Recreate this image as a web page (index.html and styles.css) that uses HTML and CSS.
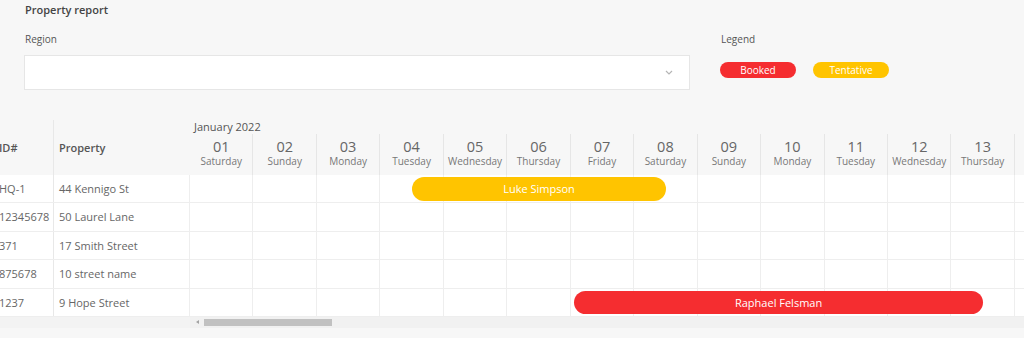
FILE: index.html
```html
<!DOCTYPE html>
<html lang="en">
<head>
    <meta charset="UTF-8">
    <title>Property report</title>
    <link rel="stylesheet" href="styles.css">
</head>
<body>
    <div class="page">
        <h1 class="title">Property report</h1>

        <div class="filters">
            <div class="field region">
                <label>Region</label>
                <div class="select">
                    <svg class="chevron" width="8" height="5" viewBox="0 0 8 5"><path d="M1 1l3 3 3-3" fill="none" stroke="#b5b5b5" stroke-width="1.2"/></svg>
                </div>
            </div>
            <div class="field legend">
                <label>Legend</label>
                <div class="badges">
                    <span class="badge booked">Booked</span>
                    <span class="badge tentative">Tentative</span>
                </div>
            </div>
        </div>
    </div>

    <div class="schedule">
        <div class="fixed">
            <div class="fixed-head">
                <div class="col-id">ID#</div>
                <div class="col-prop">Property</div>
            </div>
            <div class="fixed-row"><div class="col-id">HQ-1</div><div class="col-prop">44 Kennigo St</div></div>
            <div class="fixed-row"><div class="col-id">12345678</div><div class="col-prop">50 Laurel Lane</div></div>
            <div class="fixed-row"><div class="col-id">371</div><div class="col-prop">17 Smith Street</div></div>
            <div class="fixed-row"><div class="col-id">875678</div><div class="col-prop">10 street name</div></div>
            <div class="fixed-row"><div class="col-id">1237</div><div class="col-prop">9 Hope Street</div></div>
            <div class="scroll-gap"></div>
        </div>

        <div class="days">
            <div class="month">January 2022</div>
            <div class="day-head" id="day-head"></div>
            <div id="day-rows"></div>
            <div class="scrollbar">
                <span class="arrow"></span>
                <span class="thumb"></span>
            </div>
        </div>
    </div>

    <script>
        const dias = [
            ['01', 'Saturday'], ['02', 'Sunday'], ['03', 'Monday'], ['04', 'Tuesday'],
            ['05', 'Wednesday'], ['06', 'Thursday'], ['07', 'Friday'], ['08', 'Saturday'],
            ['09', 'Sunday'], ['10', 'Monday'], ['11', 'Tuesday'], ['12', 'Wednesday'],
            ['13', 'Thursday'], ['', '']
        ];

        const colWidth = 63.46;

        // reservas: linha, inicio (em colunas), fim (em colunas)
        const reservas = [
            { row: 0, start: 3.5, end: 7.5, name: 'Luke Simpson', type: 'tentative' },
            { row: 4, start: 6.05, end: 12.5, name: 'Raphael Felsman', type: 'booked' }
        ];

        const head = document.getElementById('day-head');
        head.innerHTML = dias.map(d => `<div class="day"><span class="num">${d[0]}</span><span class="name">${d[1]}</span></div>`).join('');

        const rows = document.getElementById('day-rows');
        let html = '';
        for (let i = 0; i < 5; i++) {
            html += '<div class="day-row">';
            html += dias.map(() => '<div class="cell"></div>').join('');
            reservas.filter(r => r.row === i).forEach(r => {
                const left = r.start * colWidth;
                const width = (r.end - r.start) * colWidth;
                html += `<div class="bar ${r.type}" style="left:${left}px;width:${width}px">${r.name}</div>`;
            });
            html += '</div>';
        }
        rows.innerHTML = html;
    </script>
</body>
</html>
```

FILE: styles.css
```css
* {
    margin: 0;
    padding: 0;
    box-sizing: border-box;
}

body {
    font-family: 'Open Sans', sans-serif;
    background-color: #f7f7f7;
    color: #666;
    overflow: hidden;
}

.page {
    padding: 2px 24px 0 24px;
}

.title {
    font-size: 11px;
    font-weight: 600;
    color: #444;
    line-height: 16px;
    padding-left: 1px;
}

.filters {
    display: flex;
    gap: 30px;
    margin-top: 14px;
}

.field label {
    display: block;
    font-size: 10px;
    line-height: 14px;
    color: #555;
    padding-left: 1px;
}

.region {
    width: 666px;
}

.select {
    margin-top: 9px;
    height: 35px;
    background-color: #fff;
    border: 1px solid #e6e6e6;
    display: flex;
    align-items: center;
    justify-content: flex-end;
    padding-right: 16px;
}

.badges {
    display: flex;
    gap: 17px;
    margin-top: 16px;
}

.badge {
    width: 76px;
    height: 16px;
    border-radius: 8px;
    color: #fff;
    font-size: 10px;
    line-height: 16px;
    text-align: center;
}

.booked {
    background-color: #f52d30;
}

.tentative {
    background-color: #ffc400;
}

.schedule {
    display: flex;
    margin-top: 30px;
    margin-left: -6px;
}

.fixed {
    width: 196px;
    flex-shrink: 0;
}

.fixed-head,
.fixed-row {
    display: flex;
}

.fixed-head {
    height: 55px;
    align-items: center;
    font-size: 11px;
    font-weight: 600;
    color: #555;
}

.fixed-head .col-id,
.fixed-head .col-prop {
    height: 100%;
    display: flex;
    align-items: center;
}

.col-id {
    width: 60px;
    padding-left: 5px;
    border-right: 1px solid #e8e8e8;
    white-space: nowrap;
    overflow: hidden;
}

.col-prop {
    width: 136px;
    padding-left: 5px;
    white-space: nowrap;
}

.fixed-row {
    height: 28.4px;
    background-color: #fff;
    border-bottom: 1px solid #eee;
    font-size: 11px;
    line-height: 27px;
}

.fixed-row .col-prop {
    border-right: 1px solid #eee;
}

.scroll-gap {
    height: 11px;
    background-color: #f3f3f3;
}

.days {
    flex: 1;
    overflow: hidden;
}

.month {
    height: 14px;
    font-size: 11px;
    line-height: 14px;
    color: #555;
    padding-left: 4px;
    white-space: nowrap;
}

.day-head {
    display: flex;
    height: 41px;
}

.day {
    width: 63.46px;
    flex-shrink: 0;
    border-right: 1px solid #e6e6e6;
    display: flex;
    flex-direction: column;
    align-items: center;
    justify-content: center;
    padding-bottom: 3px;
}

.day .num {
    font-size: 14.5px;
    line-height: 16px;
    color: #666;
}

.day .name {
    font-size: 10px;
    line-height: 13px;
    color: #777;
}

.day-row {
    position: relative;
    display: flex;
    height: 28.4px;
    background-color: #fff;
    border-bottom: 1px solid #eee;
}

.cell {
    width: 63.46px;
    flex-shrink: 0;
    border-right: 1px solid #eee;
}

.bar {
    position: absolute;
    top: 2px;
    height: 23.5px;
    border-radius: 12px;
    color: #fff;
    font-size: 11px;
    line-height: 23.5px;
    text-align: center;
    white-space: nowrap;
}

.scrollbar {
    position: relative;
    height: 11px;
    background-color: #f1f1f1;
}

.scrollbar .arrow {
    position: absolute;
    left: 6px;
    top: 3px;
    border-top: 2.5px solid transparent;
    border-bottom: 2.5px solid transparent;
    border-right: 3px solid #a3a3a3;
}

.scrollbar .thumb {
    position: absolute;
    left: 14px;
    top: 2px;
    width: 128px;
    height: 7px;
    background-color: #c1c1c1;
}
```
